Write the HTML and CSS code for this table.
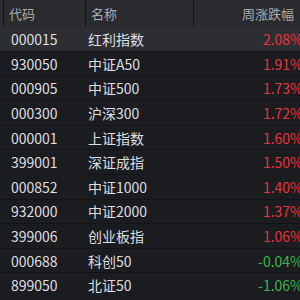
FILE: index.html
```
<!DOCTYPE html>
<html lang="zh">
<head>
<meta charset="utf-8">
<link rel="stylesheet" href="styles.css">
</head>
<body>
<div class="table">
  <div class="head">
    <div class="edge"></div>
    <div class="hc c1">代码</div>
    <div class="hc c2">名称</div>
    <div class="hc c3">周涨跌幅</div>
  </div>
  <div class="row sel"><div class="c1">000015</div><div class="c2">红利指数</div><div class="c3 up">2.08%</div></div>
  <div class="row"><div class="c1">930050</div><div class="c2">中证A50</div><div class="c3 up">1.91%</div></div>
  <div class="row"><div class="c1">000905</div><div class="c2">中证500</div><div class="c3 up">1.73%</div></div>
  <div class="row"><div class="c1">000300</div><div class="c2">沪深300</div><div class="c3 up">1.72%</div></div>
  <div class="row"><div class="c1">000001</div><div class="c2">上证指数</div><div class="c3 up">1.60%</div></div>
  <div class="row"><div class="c1">399001</div><div class="c2">深证成指</div><div class="c3 up">1.50%</div></div>
  <div class="row"><div class="c1">000852</div><div class="c2">中证1000</div><div class="c3 up">1.40%</div></div>
  <div class="row"><div class="c1">932000</div><div class="c2">中证2000</div><div class="c3 up">1.37%</div></div>
  <div class="row"><div class="c1">399006</div><div class="c2">创业板指</div><div class="c3 up">1.06%</div></div>
  <div class="row"><div class="c1">000688</div><div class="c2">科创50</div><div class="c3 down">-0.04%</div></div>
  <div class="row"><div class="c1">899050</div><div class="c2">北证50</div><div class="c3 down">-1.06%</div></div>
</div>
</body>
</html>
```
FILE: styles.css
```
html, body {
  margin: 0;
  padding: 0;
  background: #1b1c20;
  overflow: hidden;
}
.table {
  width: 303px;
  font-family: "Noto Sans CJK SC", "Noto Sans", sans-serif;
}
.head {
  display: flex;
  height: 27px;
  background: #2a2b2f;
  align-items: stretch;
}
.edge {
  width: 3px;
  border-right: 1px solid #111215;
}
.hc {
  display: flex;
  align-items: center;
  font-size: 13px;
  color: #a9aaae;
}
.head .c1 {
  width: 76px;
  padding-left: 5px;
  border-right: 1px solid #111215;
}
.head .c2 {
  width: 102px;
  padding-left: 5px;
  border-right: 1px solid #111215;
}
.head .c3 {
  flex: 1;
  justify-content: flex-end;
  padding-right: 9px;
}
.row {
  display: flex;
  align-items: center;
  height: 23.6px;
  border-top: 1px solid #131417;
  font-size: 14px;
  color: #dedfe2;
}
.row.sel {
  background: #2d2e32;
  border-top: none;
  height: 24px;
}
.row .c1 {
  width: 77px;
  padding-left: 11px;
}
.row .c2 {
  width: 110px;
}
.row .c3 {
  flex: 1;
  text-align: right;
}
.up { color: #e8343c; }
.down { color: #36b650; }
```
